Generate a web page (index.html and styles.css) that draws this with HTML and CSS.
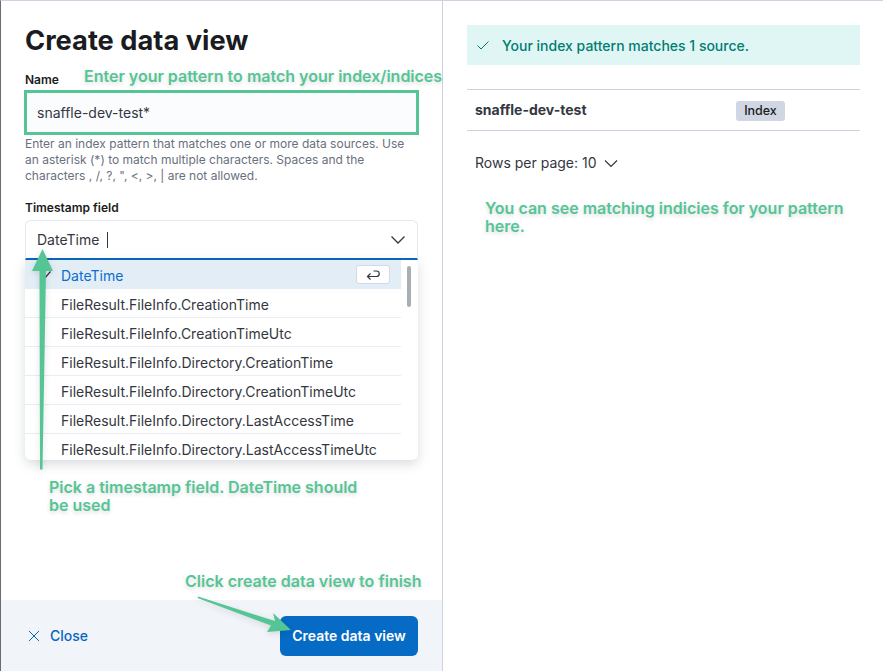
FILE: index.html
```html
<!DOCTYPE html>
<html lang="en">
<head>
    <meta charset="UTF-8">
    <title>Create data view</title>
    <link rel="stylesheet" href="styles.css">
</head>
<body>
    <div class="flyout">
        <section class="editor">
            <div class="editor-body">
                <h1 class="title">Create data view</h1>

                <label class="field-label">Name</label>
                <div class="name-input">snaffle-dev-test*</div>
                <p class="help">Enter an index pattern that matches one or more data sources. Use an asterisk (*) to match multiple characters. Spaces and the characters , /, ?, ", &lt;, &gt;, | are not allowed.</p>

                <label class="field-label timestamp-label">Timestamp field</label>
                <div class="combo">
                    <span class="combo-value">DateTime</span>
                    <span class="caret"></span>
                    <svg class="combo-chevron" width="16" height="16" viewBox="0 0 16 16"><path d="M1.500 4.500 8 11l6.500-6.500" fill="none" stroke="#343741" stroke-width="1.300"/></svg>
                </div>
                <div class="dropdown">
                    <ul class="options">
                        <li class="option selected">
                            <svg class="check" width="12" height="12" viewBox="0 0 12 12"><path d="M1.500 6.500 4.500 9.500 10.500 2.500" fill="none" stroke="#343741" stroke-width="1.200"/></svg>
                            DateTime
                            <span class="enter-key">
                                <svg width="14" height="12" viewBox="0 0 14 12"><path d="M7.500 2H10.500a2.500 2.500 0 0 1 0 5.500H1.500M4.500 4.500l-3 3 3 3" fill="none" stroke="#343741" stroke-width="1.200"/></svg>
                            </span>
                        </li>
                        <li class="option">FileResult.FileInfo.CreationTime</li>
                        <li class="option">FileResult.FileInfo.CreationTimeUtc</li>
                        <li class="option">FileResult.FileInfo.Directory.CreationTime</li>
                        <li class="option">FileResult.FileInfo.Directory.CreationTimeUtc</li>
                        <li class="option">FileResult.FileInfo.Directory.LastAccessTime</li>
                        <li class="option">FileResult.FileInfo.Directory.LastAccessTimeUtc</li>
                    </ul>
                    <div class="scroll-thumb"></div>
                </div>
            </div>
            <footer class="editor-footer">
                <a class="close-link">
                    <svg width="12" height="12" viewBox="0 0 12 12"><path d="M1 1l10 10M11 1 1 11" stroke="#0866bf" stroke-width="1"/></svg>
                    Close
                </a>
                <button class="create-button">Create data view</button>
            </footer>
        </section>

        <section class="preview">
            <div class="callout">
                <svg width="14" height="14" viewBox="0 0 14 14"><path d="M1.500 7.500 5 11 12.500 3.500" fill="none" stroke="#017d73" stroke-width="1"/></svg>
                Your index pattern matches 1 source.
            </div>
            <div class="match-row">
                <span class="match-name">snaffle-dev-test</span>
                <span class="badge">Index</span>
            </div>
            <div class="rows-per-page">
                Rows per page: 10
                <svg width="14" height="14" viewBox="0 0 14 14"><path d="M1 4.500 7 10.500 13 4.500" fill="none" stroke="#343741" stroke-width="1.200"/></svg>
            </div>
        </section>
    </div>

    <!-- Annotations drawn on top of the screenshot -->
    <div class="note note-pattern">Enter your pattern to match your index/indices</div>
    <div class="note note-timestamp">Pick a timestamp field. DateTime should be used</div>
    <div class="note note-finish">Click create data view to finish</div>
    <div class="note note-matching">You can see matching indicies for your pattern here.</div>

    <svg class="arrows" width="883" height="671" viewBox="0 0 883 671">
        <path d="M40 469.500 39.500 271H32L42.500 249 53 271H46L42.500 469.500z" fill="#55c596"/>
        <path d="M198 596.500 275 621 273 613 291 630 267 632 271 625.500 197.500 598z" fill="#55c596"/>
    </svg>
</body>
</html>
```

FILE: styles.css
```css
* {
    box-sizing: border-box;
}

body {
    margin: 0;
    background-color: #fff;
    color: #343741;
    font-family: Inter, "Liberation Sans", sans-serif;
    font-size: 14px;
}

.flyout {
    display: flex;
    width: 883px;
    height: 671px;
    overflow: hidden;
    border-top: 1px solid #cdd3e0;
    border-left: 1px solid #6a6c72;
}

.editor {
    display: flex;
    flex-direction: column;
    width: 442px;
    border-right: 1px solid #cdd3e0;
}

.editor-body {
    flex: 1;
    padding: 23px 24px 0 24px;
}

.title {
    margin: 0;
    height: 33px;
    color: #1a1c21;
    font-size: 27.250px;
    font-weight: 700;
    line-height: 33px;
}

.field-label {
    display: block;
    margin-top: 15px;
    color: #1a1c21;
    font-size: 12px;
    font-weight: 600;
    line-height: 16px;
}

.name-input {
    height: 45px;
    margin: 2px -1px 0 -1px;
    padding-left: 10px;
    border: 3px solid #55c596;
    background-color: #fbfcfd;
    font-size: 14px;
    line-height: 39px;
}

.help {
    width: 393px;
    margin: 0;
    padding-top: 1px;
    padding-right: 4px;
    color: #69707d;
    font-size: 12px;
    line-height: 16px;
}

.timestamp-label {
    margin-top: 16px;
}

.combo {
    display: flex;
    align-items: center;
    height: 40px;
    margin-top: 4px;
    padding: 0 12px 0 11px;
    border: 1px solid #e4e8f0;
    border-bottom: 2px solid #0866bf;
    border-radius: 6px 6px 0 0;
    background-color: #fff;
}

.caret {
    width: 1px;
    height: 16px;
    margin-left: 8px;
    background-color: #343741;
}

.combo-chevron {
    margin-left: auto;
    margin-right: -1px;
}

.dropdown {
    position: relative;
    height: 200px;
    overflow: hidden;
    border-radius: 0 0 6px 6px;
    background-color: #fff;
    box-shadow: 0 4px 12px rgba(65, 78, 101, 0.2);
}

.options {
    width: 376px;
    margin: 0;
    padding: 0;
    list-style: none;
}

.option {
    position: relative;
    height: 29px;
    padding-left: 36px;
    border-bottom: 1px solid #e9edf3;
    line-height: 31px;
}

.option.selected {
    border-bottom: none;
    background-color: #e3edf6;
    color: #0a6fcc;
}

.check {
    position: absolute;
    left: 15px;
    top: 9px;
}

.enter-key {
    position: absolute;
    right: 11px;
    top: 5px;
    display: flex;
    align-items: center;
    justify-content: center;
    width: 34px;
    height: 19px;
    border: 1px solid #d3dae6;
    border-radius: 3px;
    background-color: #fff;
}

.scroll-thumb {
    position: absolute;
    left: 382px;
    top: 6px;
    width: 4px;
    height: 41px;
    border-radius: 2px;
    background-color: #a9adb4;
}

.editor-footer {
    display: flex;
    align-items: center;
    justify-content: space-between;
    height: 71px;
    padding: 0 24px 0 27px;
    background-color: #f1f4f8;
}

.close-link {
    display: flex;
    align-items: center;
    gap: 10px;
    color: #0866bf;
    font-weight: 500;
}

.create-button {
    width: 138px;
    height: 40px;
    border: none;
    border-radius: 6px;
    background-color: #066bc4;
    color: #fff;
    font-family: inherit;
    font-size: 14px;
    font-weight: 600;
}

.preview {
    flex: 1;
    padding: 24px 23px 0 24px;
}

.callout {
    display: flex;
    align-items: center;
    gap: 12px;
    width: 393px;
    height: 40px;
    padding-left: 9px;
    background-color: #e0f6f4;
    color: #017d73;
    font-weight: 500;
}

.match-row {
    display: flex;
    align-items: center;
    width: 393px;
    height: 42px;
    margin-top: 24px;
    padding-left: 8px;
    border-top: 1px solid #cdd3e0;
    border-bottom: 1px solid #cdd3e0;
}

.match-name {
    width: 261px;
    margin-top: -1px;
    color: #343741;
    font-weight: 700;
}

.badge {
    width: 49px;
    height: 20px;
    margin-top: 1px;
    border-radius: 3px;
    background-color: #d0d6e3;
    color: #1a1c21;
    font-size: 12.500px;
    font-weight: 500;
    line-height: 20px;
    text-align: center;
}

.rows-per-page {
    display: flex;
    align-items: center;
    gap: 7px;
    margin-top: 22px;
    padding-left: 8px;
    line-height: 20px;
}

.note {
    position: absolute;
    color: #55c596;
    font-size: 16px;
    font-weight: 600;
    line-height: 18px;
    text-shadow: 0 2px 4px rgba(0, 0, 0, 0.15);
}

.note-pattern {
    left: 84px;
    top: 67px;
    white-space: nowrap;
}

.note-timestamp {
    left: 49px;
    top: 478px;
    width: 330px;
}

.note-finish {
    left: 185px;
    top: 572px;
    white-space: nowrap;
}

.note-matching {
    left: 485px;
    top: 199px;
    width: 375px;
}

.arrows {
    position: absolute;
    left: 0;
    top: 0;
    pointer-events: none;
    filter: drop-shadow(0 2px 3px rgba(0, 0, 0, 0.12));
}
```
